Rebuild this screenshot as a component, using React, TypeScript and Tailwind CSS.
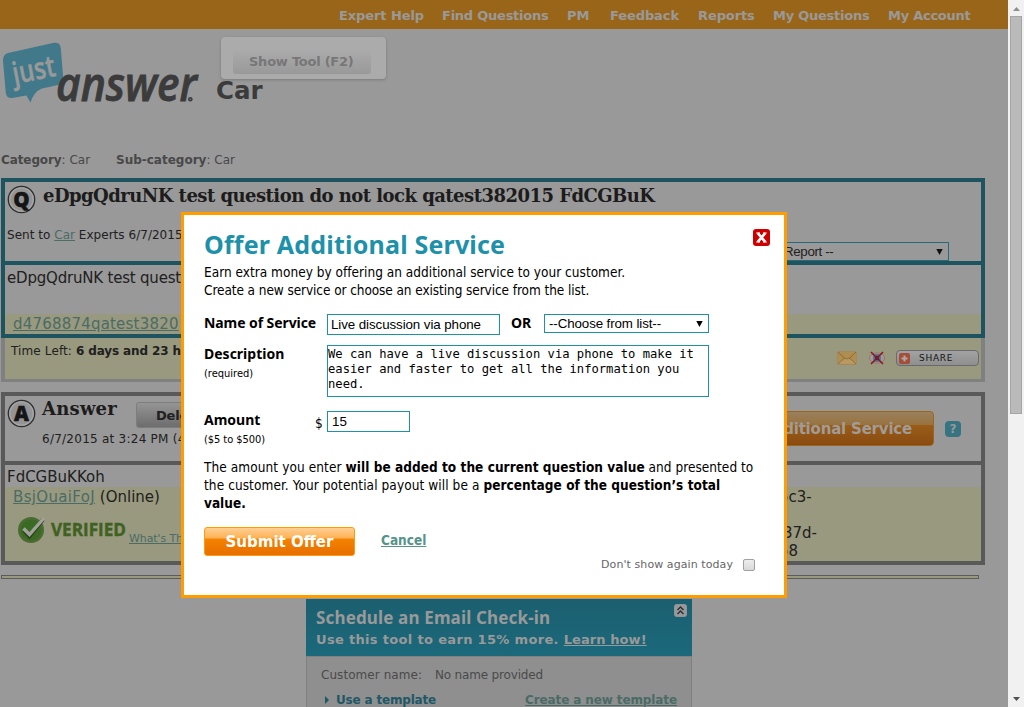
import React from 'react';

const navItems: { label: string; cls: string }[] = [
  { label: 'Expert Help', cls: 'w-[103px] tracking-[-0.09px]' },
  { label: 'Find Questions', cls: 'w-[125px] tracking-[-0.24px]' },
  { label: 'PM', cls: 'w-[43px]' },
  { label: 'Feedback', cls: 'w-[88px] tracking-[-0.1px]' },
  { label: 'Reports', cls: 'w-[75px] tracking-[-0.1px]' },
  { label: 'My Questions', cls: 'w-[115px] tracking-[-0.24px]' },
  { label: 'My Account', cls: 'w-[120px] tracking-[-0.26px]' },
];

function TopNav() {
  return (
    <nav className="flex h-[29px] items-center bg-[#996619] pl-[339px] pt-[2px] text-[13px] font-bold text-[#999]">
      {navItems.map((n) => (
        <a key={n.label} className={`shrink-0 ${n.cls}`}>
          {n.label}
        </a>
      ))}
    </nav>
  );
}

function Logo() {
  return (
    <svg className="mt-[12px] h-[66px] w-[204px] shrink-0 overflow-visible" viewBox="0 41 204 66">
      <path
        d="M8 53 L54 42.8 Q60 42 60.8 48 L63.2 78 Q63.5 83 58 85 L42 88.5 Q34 91.5 30.5 102.5 Q28 98.5 26.5 95.5 L12 98 Q6.5 98.5 5.8 93 L3 61 Q2.7 54.5 8 53Z"
        fill="#42798a"
      />
      <text
        x="14.5"
        y="84"
        transform="rotate(-11 14.5 84)"
        fill="#999"
        stroke="#999"
        strokeWidth="0.5"
        fontFamily="'Open Sans'"
        fontWeight="600"
        fontSize="30"
        textLength="43"
        lengthAdjust="spacingAndGlyphs"
      >
        just
      </text>
      <text
        x="56"
        y="101"
        fill="#3b3b3b"
        fontFamily="'Open Sans'"
        fontStyle="italic"
        fontWeight="600"
        stroke="#3b3b3b"
        strokeWidth="0.9"
        fontSize="47"
        textLength="141"
        lengthAdjust="spacingAndGlyphs"
      >
        answer
      </text>
      <circle cx="190.3" cy="99.2" r="2.3" fill="#3b3b3b" />
      <circle cx="190.3" cy="99.2" r="0.8" fill="#777" />
    </svg>
  );
}

function LetterBadge({ letter }: { letter: string }) {
  return (
    <svg className="h-[29px] w-[29px] shrink-0" viewBox="0 0 29 29">
      <circle cx="14.5" cy="14.5" r="13.2" fill="#8d8d8d" stroke="#2e2e2e" strokeWidth="1.3" />
      <circle cx="14.5" cy="14.5" r="11.6" fill="#949494" stroke="#a6a6a6" strokeWidth="1.4" />
      <text
        x="14.5"
        y="21.8"
        textAnchor="middle"
        fontFamily="'Open Sans'"
        fontWeight="800"
        fontSize="20.5"
        fill="#151515"
        stroke="#151515"
        strokeWidth="0.5"
      >
        {letter}
      </text>
    </svg>
  );
}

function Link({ className = '', children }: { className?: string; children: React.ReactNode }) {
  return <a className={`text-[#4a6b66] underline ${className}`}>{children}</a>;
}

function QuestionBox() {
  return (
    <section className="ml-[1px] w-[984px]">
      <div className="border-4 border-[#1d545f]">
        <div className="flex h-[79px] justify-between">
          <div className="flex flex-col pl-[2px]">
            <div className="flex h-[33px] items-start pt-[3px]">
              <LetterBadge letter="Q" />
              <h2 className="ml-[7px] mt-[-2px] whitespace-nowrap font-['DejaVu_Serif'] text-[18px] leading-[26px] font-bold tracking-[-0.53px] text-[#1c1c1c]">
                eDpgQdruNK test question do not lock qatest382015 FdCGBuK
              </h2>
            </div>
            <p className="whitespace-nowrap leading-[40px] tracking-[0.03px]">
              Sent to <Link>Car</Link> Experts 6/7/2015
            </p>
          </div>
          <div className="mr-[32px] mt-[60px] flex h-[19px] w-[200px] items-center justify-between border border-[#296a78] pr-[5px] pl-[34px] font-['Liberation_Sans'] text-[13.333px]">
            <span className="tracking-[-0.35px]">Report --</span>
            <svg className="h-[6px] w-[7px]" viewBox="0 0 7 6">
              <path d="M0.3 0H6.7L3.5 6Z" fill="#111" />
            </svg>
          </div>
        </div>
        <div className="h-[53px] border-t-4 border-[#1d545f] pl-[2px] text-[15px] leading-[26px] tracking-[-0.2px]">
          eDpgQdruNK test question
        </div>
        <div className="h-[20px] bg-[#99997f] pl-[8px] text-[15px] leading-[20px] tracking-[0.2px]">
          <Link>d4768874qatest3820</Link>
        </div>
      </div>
      <div className="flex h-[44px] items-start justify-between border-x-4 border-b-[3px] border-[#808080] bg-[#99997f] pl-[6px]">
        <p className="leading-[26px]">
          <span className="tracking-[0.12px]">Time Left: </span>
          <b className="tracking-[-0.12px]">6 days and 23 hours</b>
        </p>
        <div className="mr-[2px] mt-[12px] flex items-center">
          <svg className="h-[14px] w-[20px]" viewBox="0 0 20 14">
            <rect x="0.5" y="0.5" width="19" height="13" rx="1" fill="#b08d50" stroke="#a38a5c" />
            <path d="M1 13L8 6.8M19 13L12 6.8M1 1L7.5 7.2Q10 9 12.5 7.2L19 1" fill="none" stroke="#8a6a38" />
            <path d="M1.5 12.8L8 7.6Q10 9.6 12 7.6L18.5 12.8Z" fill="#b99a60" />
          </svg>
          <svg className="ml-[12px] h-[14px] w-[16px]" viewBox="0 0 16 14">
            <ellipse cx="8" cy="7" rx="7.6" ry="5.2" fill="#a09b98" stroke="#94705d" strokeWidth="0.8" />
            <circle cx="8" cy="7" r="4" fill="#54708f" />
            <circle cx="8" cy="7" r="1.9" fill="#202a3a" />
            <path d="M2 1L14 13M14 1L2 13" stroke="#8c1220" strokeWidth="1.5" />
          </svg>
          <div className="ml-[11px] flex h-[16px] w-[83px] items-center rounded-[4px] border border-[#6a6a6e] bg-gradient-to-b from-[#a2a2a2] to-[#8f8f8f] pl-[2px]">
            <svg className="h-[11px] w-[11px]" viewBox="0 0 11 11">
              <rect width="11" height="11" rx="2" fill="#a44e37" />
              <path d="M5.5 2.5V8.5M2.5 5.5H8.5" stroke="#b0a8a4" strokeWidth="2" />
            </svg>
            <span className="ml-[9px] text-[9px] leading-[14px] tracking-[0.7px] text-[#151515]">SHARE</span>
          </div>
        </div>
      </div>
    </section>
  );
}

function AnswerBox() {
  return (
    <section className="mt-[10px] ml-[1px] w-[984px] border-4 border-[#595959]">
      <div className="flex h-[65px] items-start">
        <div className="pt-[3px] pl-[2px]">
          <LetterBadge letter="A" />
        </div>
        <div className="w-[94px] pl-[6px]">
          <h2 className="font-['DejaVu_Serif'] text-[18px] leading-[26px] font-bold tracking-[0.23px] text-[#1c1c1c]">
            Answer
          </h2>
          <p className="whitespace-nowrap leading-[34px] tracking-[0.25px]">6/7/2015 at 3:24 PM (4</p>
        </div>
        <div className="ml-[6px] mt-[6px] h-[26px] w-[90px] rounded-[3px] border border-[#7d7d7d] bg-gradient-to-b from-[#959595] to-[#6d6d6d] pl-[19px] text-[13px] leading-[25px] font-bold tracking-[-0.2px]">
          Delete
        </div>
        <div className="mt-[15px] ml-auto flex items-center">
          <div className="flex h-[35px] w-[260px] items-center justify-end rounded-[4px] border border-[#9b661c] bg-[linear-gradient(#99805e_0%,#99733f_38%,#995d18_40%,#8a4b11_100%)] pr-[21px] text-[15px] font-bold whitespace-nowrap text-[#a09c99] tracking-[-0.2px]">
            Offer Additional Service
          </div>
          <div className="mr-[20px] ml-[11px] flex h-[16px] w-[16px] items-center justify-center rounded-[4px] bg-[#367482] text-[12px] leading-[16px] font-bold text-[#999]">
            ?
          </div>
        </div>
      </div>
      <div className="h-[26px] border-t-4 border-[#595959] pl-[2px] text-[15px] leading-[24px]">FdCGBuKKoh</div>
      <div className="flex h-[74px] justify-between bg-[#99997f] text-[15px] leading-[18px]">
        <div className="pl-[8px]">
          <p className="leading-[20px]">
            <Link className="tracking-[0.34px]">BsjOuaiFoJ</Link> (Online)
          </p>
          <div className="flex items-start pt-[9px] pl-[4px]">
            <svg className="h-[28px] w-[110px] overflow-visible" viewBox="0 0 110 28">
              <circle cx="14" cy="14" r="13" fill="#4a6b32" />
              <circle cx="14" cy="14" r="10.5" fill="#3b6a24" />
              <path d="M7 14.5L12.5 20.5L26 3.5" fill="none" stroke="#2b431b" strokeWidth="4" />
              <path d="M6.5 12.5L12.5 18.5L27 2" fill="none" stroke="#a2a29c" strokeWidth="3.4" />
              <text
                x="34"
                y="20"
                fill="#3f6121"
                stroke="#3f6121"
                strokeWidth="0.4"
                fontFamily="'Open Sans'"
                fontWeight="700"
                fontSize="18"
                textLength="75"
                lengthAdjust="spacingAndGlyphs"
              >
                VERIFIED
              </text>
            </svg>
            <Link className="mt-[14px] ml-[2px] text-[11px] whitespace-nowrap tracking-[-0.1px]">What's This?</Link>
          </div>
        </div>
        <div className="w-[202px] pt-[1px]">
          <p>5c3-</p>
          <p className="mt-[18px] pl-[4px]">37d-</p>
          <p>58</p>
        </div>
      </div>
    </section>
  );
}

function CheckInCard() {
  return (
    <section className="mt-[20px] ml-[306px] w-[386px] font-bold">
      <header className="flex h-[57px] justify-between bg-gradient-to-b from-[#1b5f70] to-[#1b697b] pl-[10px] text-[#999]">
        <div className="pt-[7px]">
          <h3 className="font-['Noto_Sans'] text-[17px] leading-[23px] font-bold tracking-[0.15px]">
            Schedule an Email Check-in
          </h3>
          <p className="text-[13px] leading-[21px]">
            <span className="tracking-[0.33px]">Use this tool to earn 15% more. </span>
            <span className="tracking-[0.08px] underline">Learn how!</span>
          </p>
        </div>
        <svg className="mt-[5px] mr-[5px] h-[13px] w-[13px]" viewBox="0 0 13 13">
          <rect x="0.5" y="0.5" width="12" height="12" rx="2" fill="#999" stroke="#8f949a" />
          <path d="M3.5 6L6.5 3L9.5 6M3.5 10L6.5 7L9.5 10" fill="none" stroke="#2b2b35" strokeWidth="1.4" />
        </svg>
      </header>
      <div className="h-[60px] border border-[#808080] bg-[#8f8f8f] pt-[6px] text-[12px] text-[#4a4a4a]">
        <p className="pl-[14px] leading-[24px] font-normal">
          <span className="inline-block w-[114px] tracking-[0.06px]">Customer name:</span>
          <span className="tracking-[-0.17px]">No name provided</span>
        </p>
        <div className="flex items-center justify-between pr-[14px] pl-[18px] leading-[26px]">
          <span className="flex items-center text-[#1e5766] tracking-[-0.18px]">
            <svg className="mr-[7px] h-[8px] w-[4px]" viewBox="0 0 4 8">
              <path d="M0 0L4 4L0 8Z" fill="#1e5766" />
            </svg>
            Use a template
          </span>
          <Link className="tracking-[-0.11px]">Create a new template</Link>
        </div>
      </div>
    </section>
  );
}

function Modal() {
  return (
    <div className="absolute top-[212px] left-[181px] h-[386px] w-[606px] border-[3px] border-[#ff9c00] bg-white pt-[14px] pr-[14px] pl-[20px] font-['DejaVu_Sans_Condensed'] text-[13.5px] leading-[18px] text-black">
      <div className="flex items-start justify-between">
        <h1 className="h-[34px] font-['Noto_Sans'] text-[25px] leading-[31px] font-bold tracking-[0.19px] text-[#1d91a9]">
          Offer Additional Service
        </h1>
        <svg className="h-[17px] w-[17px]" viewBox="0 0 17 17">
          <rect width="17" height="17" rx="3" fill="#c00" />
          <path d="M4.8 4.2L12.2 12.8M12.2 4.2L4.8 12.8" stroke="#fff" strokeWidth="2.6" />
          <path d="M3.2 4H7M10 4H13.8M3.2 13H7M10 13H13.8" stroke="#fff" strokeWidth="1.2" />
        </svg>
      </div>
      <p className="tracking-[0.02px]">Earn extra money by offering an additional service to your customer.</p>
      <p className="tracking-[-0.08px]">Create a new service or choose an existing service from the list.</p>

      <div className="mt-[15px] flex items-start">
        <label className="w-[123px] font-['Noto_Sans'] text-[14px] font-bold tracking-[-0.08px]">Name of Service</label>
        <div className="h-[21px] w-[173px] border border-[#1d91a9] pl-[3px] font-['Liberation_Sans'] text-[13.333px] leading-[19px] tracking-[-0.08px]">
          Live discussion via phone
        </div>
        <b className="w-[44px] pl-[11px] font-['Noto_Sans'] text-[14px]">OR</b>
        <div className="flex h-[19px] w-[165px] items-center justify-between border border-[#1d91a9] pr-[5px] pl-[4px] font-['Liberation_Sans'] text-[13.333px] tracking-[-0.1px]">
          --Choose from list--
          <svg className="h-[6px] w-[7px]" viewBox="0 0 7 6">
            <path d="M0.3 0H6.7L3.5 6Z" fill="#000" />
          </svg>
        </div>
      </div>

      <div className="mt-[10px] flex items-start">
        <div className="w-[123px]">
          <b className="block font-['Noto_Sans'] text-[14px]">Description</b>
          <span className="block text-[11px] leading-[21px]">(required)</span>
        </div>
        <div className="h-[52px] w-[382px] border border-[#1d91a9] pt-px font-['DejaVu_Sans_Mono'] text-[12.16px] leading-[15px] whitespace-pre">
          {'We can have a live discussion via phone to make it\neasier and faster to get all the information you\nneed.'}
        </div>
      </div>

      <div className="mt-[14px] flex items-start">
        <div className="w-[111px]">
          <b className="block font-['Noto_Sans'] text-[14px] leading-[18px]">Amount</b>
          <span className="block pt-px text-[11px] leading-[20px] tracking-[-0.06px]">($5 to $500)</span>
        </div>
        <span className="w-[12px] pt-[3px]">$</span>
        <div className="h-[21px] w-[83px] border border-[#1d91a9] pl-[4px] font-['Liberation_Sans'] text-[13.333px] leading-[19px]">
          15
        </div>
      </div>

      <p className="mt-[8px] w-[570px]">
        <span className="tracking-[0.09px]">The amount you enter </span>
        <b className="tracking-[0.05px]">will be added to the current question value</b>
        <span className="tracking-[0.04px]"> and presented to</span>
        <br />
        <span className="tracking-[0.09px]">the customer. Your potential payout will be a </span>
        <b className="tracking-[0.05px]">percentage of the question’s total</b>
        <br />
        <b>value.</b>
      </p>

      <div className="mt-[15px] flex items-start">
        <div className="h-[29px] w-[151px] rounded-[3px] border border-[#ff9c00] bg-[linear-gradient(#ffcf94_0%,#ffb152_38%,#f58200_40%,#e66f00_100%)] text-center font-['DejaVu_Sans'] text-[15px] leading-[28px] font-bold text-white">
          Submit Offer
        </div>
        <a className="mt-[4px] ml-[26px] font-bold text-[#559389] underline">Cancel</a>
      </div>
      <div className="flex h-[17px] items-center justify-end pr-[15px] font-['DejaVu_Sans'] text-[11px] text-[#666]">
        <span className="tracking-[0.08px]">Don't show again today</span>
        <span className="mt-[1px] ml-[10px] h-[12px] w-[12px] rounded-[2px] border border-[#a0a0a0] bg-gradient-to-b from-[#ededed] to-[#d9d9d9]" />
      </div>
    </div>
  );
}

function Scrollbar() {
  return (
    <aside className="flex w-[16px] shrink-0 flex-col items-center bg-[#f1f1f1]">
      <svg className="mt-[7px] h-[4px] w-[7px]" viewBox="0 0 7 4">
        <path d="M3.5 0L7 4H0Z" fill="#8f8f8f" />
      </svg>
      <div className="mt-[5px] h-[398px] w-[12px] border border-[#a5a5a5] bg-[#bababa]" />
      <svg className="mt-auto mb-[6px] h-[4px] w-[7px]" viewBox="0 0 7 4">
        <path d="M0 0H7L3.5 4Z" fill="#505050" />
      </svg>
    </aside>
  );
}

export default function App() {
  return (
    <div className="relative flex h-[707px] w-[1024px] overflow-hidden bg-[#999] font-['DejaVu_Sans'] text-[12px] leading-[18px] text-[#202020]">
      <main className="h-[707px] w-[1008px] shrink-0 overflow-hidden">
        <TopNav />
        <div className="flex h-[121px] items-start">
          <Logo />
          <h1 className="ml-[12px] mt-[46px] text-[24.5px] leading-[31px] font-bold text-[#3b3b3b]">Car</h1>
        </div>
        <div className="flex h-[28px] pl-[1px] leading-[20px] text-[#484848]">
          <p className="w-[115px]">
            <b className="tracking-[-0.1px]">Category</b>: Car
          </p>
          <p>
            <b>Sub-category</b>: Car
          </p>
        </div>
        <QuestionBox />
        <AnswerBox />
        <div className="mt-[10px] ml-[1px] h-[4px] w-[978px] border border-[#5c5c5c] bg-[#99997f]" />
        <CheckInCard />
      </main>
      <Scrollbar />
      <div className="absolute top-[37px] left-[221px] h-[42px] w-[165px] rounded-[4px] bg-[#ababab] pt-[11px] pl-[12px] shadow-[0_1px_3px_rgba(0,0,0,0.2)]">
        <div className="h-[26px] w-[138px] rounded-[3px] bg-gradient-to-b from-[#acacac] to-[#999] pl-[16px] text-[13px] leading-[27px] font-bold tracking-[-0.24px] text-[#777]">
          Show Tool (F2)
        </div>
      </div>
      <Modal />
    </div>
  );
}
